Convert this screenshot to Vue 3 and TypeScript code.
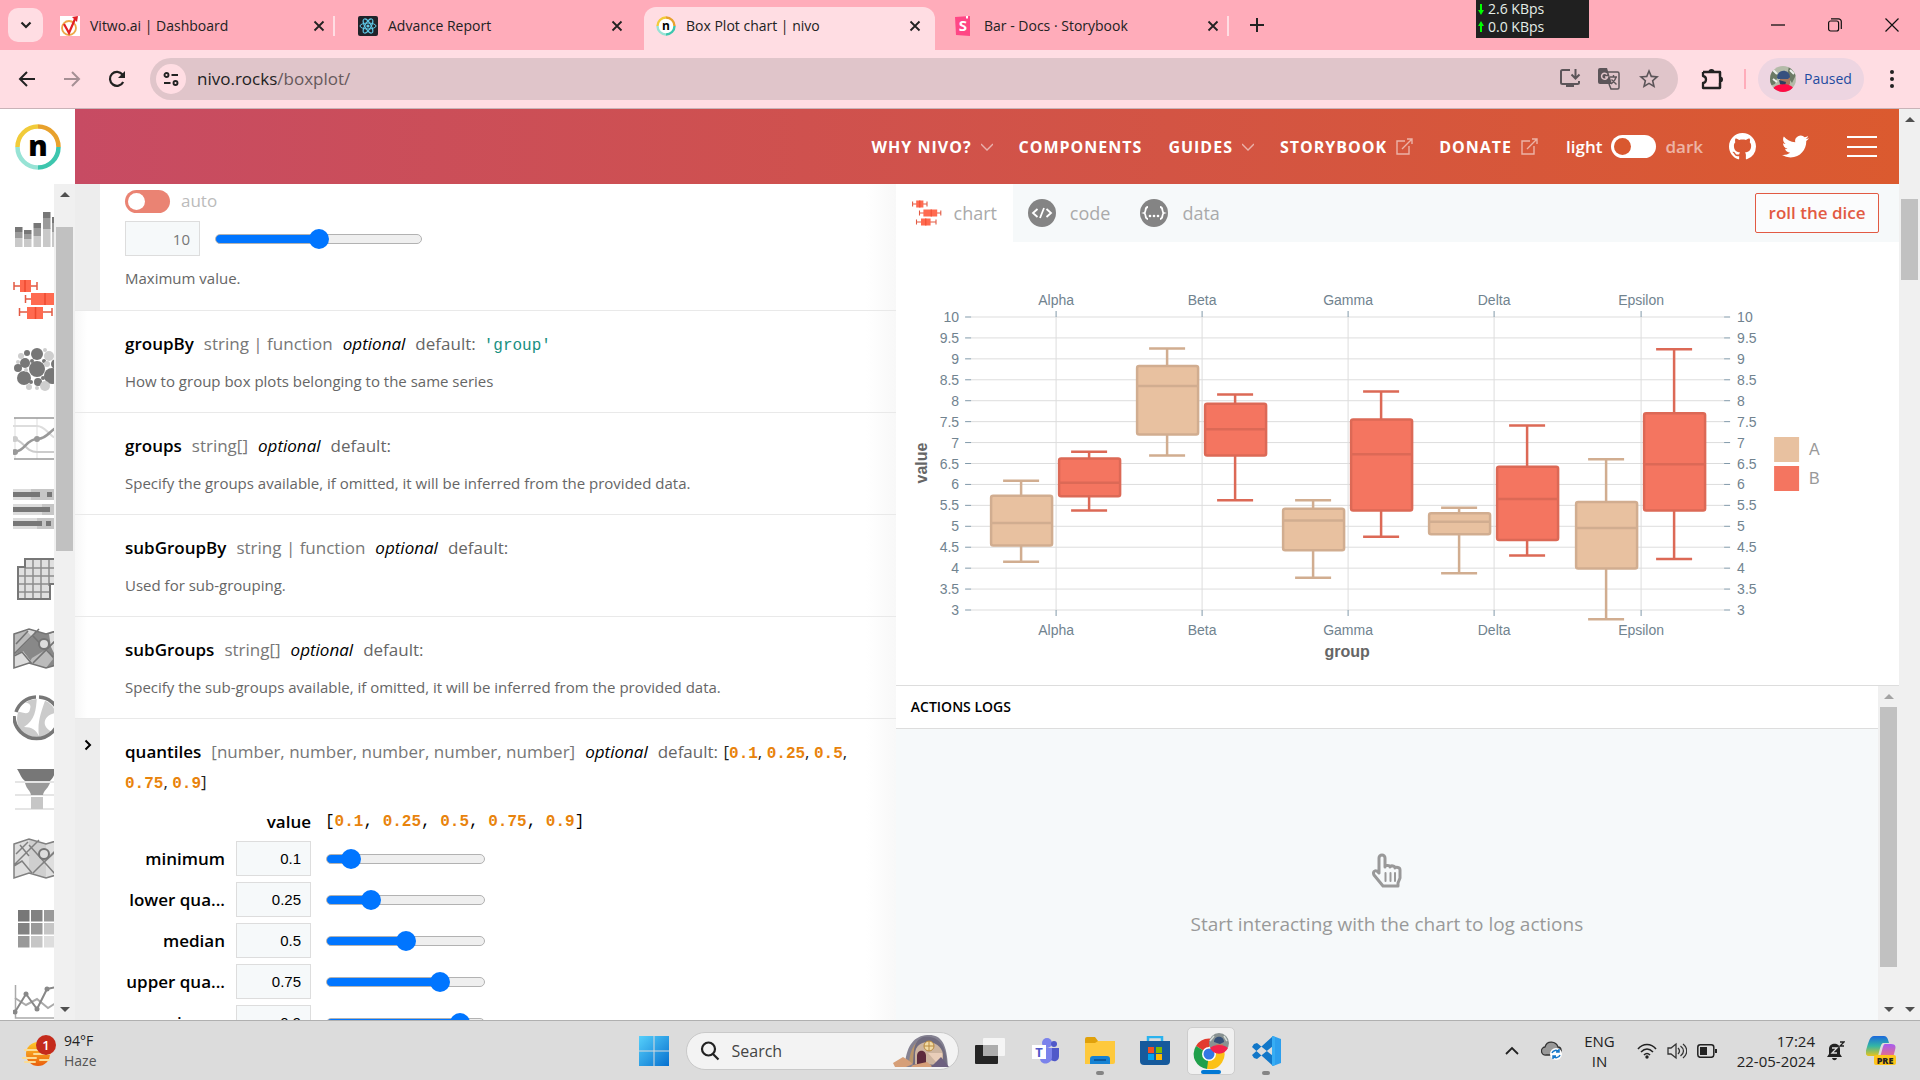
<script setup lang="ts">
import { computed, ref } from 'vue'

interface BrowserTab {
  id: string
  title: string
  active?: boolean
}

const browserTabs: BrowserTab[] = [
  { id: 'vitwo', title: 'Vitwo.ai | Dashboard' },
  { id: 'react', title: 'Advance Report' },
  { id: 'nivo', title: 'Box Plot chart | nivo', active: true },
  { id: 'storybook', title: 'Bar - Docs · Storybook' },
]

interface NavLink {
  label: string
  icon?: 'chevron' | 'external'
}

const navLinks: NavLink[] = [
  { label: 'WHY NIVO?', icon: 'chevron' },
  { label: 'COMPONENTS' },
  { label: 'GUIDES', icon: 'chevron' },
  { label: 'STORYBOOK', icon: 'external' },
  { label: 'DONATE', icon: 'external' },
]

interface Prop {
  name: string
  type: string
  value?: string
  help: string
}

const props: Prop[] = [
  { name: 'groupBy', type: 'string | function', value: "'group'", help: 'How to group box plots belonging to the same series' },
  { name: 'groups', type: 'string[]', help: 'Specify the groups available, if omitted, it will be inferred from the provided data.' },
  { name: 'subGroupBy', type: 'string | function', help: 'Used for sub-grouping.' },
  { name: 'subGroups', type: 'string[]', help: 'Specify the sub-groups available, if omitted, it will be inferred from the provided data.' },
]

const maxValue = ref(10)
const quantiles = ref([
  { label: 'minimum', value: 0.1 },
  { label: 'lower qua...', value: 0.25 },
  { label: 'median', value: 0.5 },
  { label: 'upper qua...', value: 0.75 },
  { label: 'maximum', value: 0.9 },
])

const groups = ['Alpha', 'Beta', 'Gamma', 'Delta', 'Epsilon']
const colors = {
  A: { fill: '#e8c1a0', stroke: '#d1ad90' },
  B: { fill: '#f47560', stroke: '#dc6956' },
}
type Series = keyof typeof colors

// maximum, upper quartile, median, lower quartile, minimum
const summaries: Record<Series, number[][]> = {
  A: [
    [6.09, 5.73, 5.08, 4.54, 4.15],
    [9.25, 8.83, 8.35, 7.19, 6.69],
    [5.62, 5.42, 5.14, 4.43, 3.77],
    [5.44, 5.31, 5.11, 4.81, 3.88],
    [6.6, 5.58, 4.96, 3.99, 2.78],
  ],
  B: [
    [6.78, 6.62, 6.04, 5.72, 5.38],
    [8.15, 7.93, 7.32, 6.69, 5.62],
    [8.22, 7.55, 6.72, 5.38, 4.75],
    [7.41, 6.42, 5.65, 4.67, 4.3],
    [9.23, 7.7, 6.48, 5.38, 4.22],
  ],
}

const plot = { left: 75, right: 828, top: 75, bottom: 368 }
const yScale = (v: number): number => plot.top + ((10 - v) / 7) * (plot.bottom - plot.top)
const xScale = (i: number): number => Math.floor(160 + i * 146.25)
const yTicks = Array.from({ length: 15 }, (_, i) => 10 - i / 2)

const boxes = computed(() =>
  (['A', 'B'] as Series[]).flatMap((series) =>
    summaries[series].map((values, i) => {
      const [high, q3, mid, q1, low] = values.map(yScale)
      return { key: series + i, x: xScale(i) + (series === 'A' ? -35 : 33), high, q3, mid, q1, low, ...colors[series] }
    }),
  ),
)

const heat = ['#777', '#828282', '#999', '#828282', '#999', '#c6c6c6', '#999', '#c6c6c6', '#ddd']
const bubbles: number[][] = [
  [24, 25, 8, 0], [24, 10, 6, 0], [12, 19, 5, 0], [11, 34, 7, 0], [39, 32, 8, 0], [5, 24, 4, 0],
  [25, 38, 4, 0], [43, 20, 5, 0], [14, 9, 3, 0], [31, 17, 2, 0], [36, 12, 5, 1], [8, 12, 3, 1],
  [5, 18, 2, 1], [32, 42, 5, 1], [16, 43, 3, 1], [24, 44, 2, 1], [32, 6, 2, 1], [34, 20, 3, 1],
  [18, 38, 2, 0], [13, 26, 2, 1], [19, 17, 2, 0], [30, 34, 2, 0],
]
</script>

<template>
  <div class="screen">
    <header class="tabstrip">
      <button class="tab-search" aria-label="Search tabs">
        <svg width="12" height="8" viewBox="0 0 12 8"><path d="M1.500 1.500 6 6l4.500-4.500" fill="none" stroke="#222" stroke-width="2.200" /></svg>
      </button>
      <div class="tabs">
        <div v-for="tab in browserTabs" :key="tab.id" class="tab" :class="{ active: tab.active }">
          <svg v-if="tab.id === 'vitwo'" class="fav" viewBox="0 0 20 20">
            <path d="M0 0h20v20H0z" fill="#fff" /><circle cx="9" cy="12" r="7" fill="none" stroke="#eda84a" stroke-width="1.800" />
            <path d="M4 8l5 9 6-14" fill="none" stroke="#e21f26" stroke-width="2.200" /><path d="M12 1l6-1-1 6z" fill="#e21f26" />
          </svg>
          <svg v-else-if="tab.id === 'react'" class="fav" viewBox="0 0 20 20">
            <rect width="20" height="20" rx="2" fill="#20232a" />
            <g fill="none" stroke="#5fc9e8"><ellipse cx="10" cy="10" rx="8" ry="3" /><ellipse cx="10" cy="10" rx="8" ry="3" transform="rotate(60 10 10)" /><ellipse cx="10" cy="10" rx="8" ry="3" transform="rotate(120 10 10)" /></g>
            <circle cx="10" cy="10" r="1.600" fill="#5fc9e8" />
          </svg>
          <svg v-else-if="tab.id === 'nivo'" class="fav" viewBox="0 0 20 20">
            <circle cx="10" cy="10" r="8" fill="#fff" />
            <g fill="none" stroke-width="2.400"><path d="M1.500 10A8.500 8.500 0 0 1 10 1.500" stroke="#f1cb3a" /><path d="M10 1.500a8.500 8.500 0 0 1 8.500 8.500" stroke="#e8a12c" /><path d="M18.500 10a8.500 8.500 0 0 1-8.500 8.500" stroke="#3dc6ae" /><path d="M10 18.500A8.500 8.500 0 0 1 1.500 10" stroke="#97e3d5" /></g>
            <text x="10" y="14" text-anchor="middle" class="fav-n">n</text>
          </svg>
          <svg v-else class="fav" viewBox="0 0 20 20">
            <path d="M1 1l15-1v20L2 19z" fill="#ff4785" /><text x="9" y="15" text-anchor="middle" class="fav-s">S</text><path d="M12 0h2v3l-1-1-1 1z" fill="#fff" />
          </svg>
          <span class="tab-title">{{ tab.title }}</span>
          <button class="tab-close" :aria-label="'Close ' + tab.title">
            <svg width="12" height="12" viewBox="0 0 12 12"><path d="M1.500 1.500l9 9M10.500 1.500l-9 9" stroke="#222" stroke-width="1.800" /></svg>
          </button>
        </div>
      </div>
      <button class="new-tab" aria-label="New tab">
        <svg width="14" height="14" viewBox="0 0 14 14"><path d="M7 0v14M0 7h14" stroke="#222" stroke-width="2" /></svg>
      </button>
      <div class="netspeed">
        <div><svg width="8" height="12" viewBox="0 0 8 12"><path d="M3 1h2v6h2l-3 5-3-5h2z" fill="#0f0" /></svg>2.6 KBps</div>
        <div><svg width="8" height="12" viewBox="0 0 8 12"><path d="M3 11h2V5h2L4 0 1 5h2z" fill="#0f0" /></svg>0.0 KBps</div>
      </div>
      <div class="window-buttons">
        <button aria-label="Minimise"><svg width="14" height="14" viewBox="0 0 14 14"><path d="M0 7h14" stroke="#111" stroke-width="1.300" /></svg></button>
        <button aria-label="Restore"><svg width="14" height="14" viewBox="0 0 14 14"><g fill="none" stroke="#111" stroke-width="1.200"><rect x=".6" y="3" width="10" height="10" rx="2" /><path d="M3 .8h7.500a2.800 2.800 0 0 1 2.800 2.800V11" /></g></svg></button>
        <button aria-label="Close"><svg width="14" height="14" viewBox="0 0 14 14"><path d="M.5.5l13 13M13.500.5l-13 13" stroke="#111" stroke-width="1.200" /></svg></button>
      </div>
    </header>

    <div class="toolbar">
      <div class="nav-buttons">
        <button aria-label="Back"><svg width="18" height="18" viewBox="0 0 18 18"><path d="M17 9H2.500M9 2L2 9l7 7" fill="none" stroke="#222" stroke-width="2" /></svg></button>
        <button aria-label="Forward"><svg width="18" height="18" viewBox="0 0 18 18"><path d="M1 9h14.500M9 2l7 7-7 7" fill="none" stroke="#a58f94" stroke-width="2" /></svg></button>
        <button aria-label="Reload"><svg width="18" height="18" viewBox="0 0 18 18"><path d="M15.200 12A7 7 0 1 1 14.500 4.500L16 6" fill="none" stroke="#222" stroke-width="2.200" /><path d="M17 1v7h-7z" fill="#222" /></svg></button>
      </div>
      <div class="omnibox">
        <button class="site-info" aria-label="Site information">
          <svg width="16" height="14" viewBox="0 0 16 14"><g fill="none" stroke="#222" stroke-width="1.900"><circle cx="3.500" cy="3" r="2" /><path d="M8.500 3H15M1 11h6.500" /><circle cx="12.500" cy="11" r="2" /></g></svg>
        </button>
        <div class="url">nivo.rocks<span>/boxplot/</span></div>
        <button aria-label="Install"><svg width="22" height="22" viewBox="0 0 22 22"><g fill="none" stroke="#5c5559" stroke-width="2"><path d="M11 2H3.500A1.500 1.500 0 0 0 2 3.500v11A1.500 1.500 0 0 0 3.500 16h15a1.500 1.500 0 0 0 1.500-1.500V13" /><path d="M16.500 1v9M12.500 6.500l4 4 4-4" /></g><path d="M7 16h8v3H7z" fill="#5c5559" /></svg></button>
        <button aria-label="Translate"><svg width="22" height="22" viewBox="0 0 22 22"><path d="M2 0h7l5 16H2a2 2 0 0 1-2-2V2a2 2 0 0 1 2-2z" fill="#5c5559" /><path d="M10 4h9.500A1.500 1.500 0 0 1 21 5.500v14a1.500 1.500 0 0 1-1.500 1.500H13l-2-5" fill="none" stroke="#5c5559" stroke-width="1.500" /><path d="M12 9h7M15.500 7v2M18 9c-.5 3-3 5.500-5 7M13.500 11.500l5 5" stroke="#5c5559" stroke-width="1.400" fill="none" /><path d="M9 6.500A3 3 0 1 0 9.500 9H7" fill="none" stroke="#e0c5ca" stroke-width="1.500" /></svg></button>
        <button aria-label="Bookmark"><svg width="24" height="24" viewBox="0 0 24 24"><path fill="#5c5559" d="M22 9.240l-7.190-.62L12 2 9.190 8.630 2 9.240l5.460 4.730L5.820 21 12 17.270 18.180 21l-1.630-7.030L22 9.240zM12 15.400l-3.760 2.270 1-4.280-3.320-2.880 4.380-.38L12 6.100l1.710 4.040 4.380.38-3.320 2.880 1 4.280L12 15.400z" /></svg></button>
      </div>
      <button class="extensions" aria-label="Extensions"><svg width="22" height="22" viewBox="0 0 22 22"><path d="M2 4h17v4.500M2 4v4c4 .5 4 6.500 0 7v5h17v-5" fill="none" stroke="#222" stroke-width="2.300" stroke-linejoin="round" /><path d="M19 4v16" stroke="#222" stroke-width="2.300" /><path d="M7.500 4a3 3 0 0 1 6 0zM19 8.500a3 3 0 0 1 0 6z" fill="#222" /></svg></button>
      <span class="divider"></span>
      <button class="profile">
        <svg width="26" height="26" viewBox="0 0 26 26"><defs><clipPath id="avatar-clip"><circle cx="13" cy="13" r="13" /></clipPath></defs><g clip-path="url(#avatar-clip)"><path d="M0 0h26v26H0z" fill="#b4bba9" /><path d="M0 2l8 7-3 9-5 2zM19 0l7 9-4 8-5-7z" fill="#6b7a65" /><path d="M2 3l5 5M20 4l4 4M3 13l4 3" stroke="#edf1ee" stroke-width="2" /><path d="M10 12h10v6l-4 3-6-2z" fill="#a4765e" /><path d="M7 12c0-9 12-10 13-1l-2 2H8z" fill="#36517f" /><path d="M9 14l7 2-1 4-5-2z" fill="#2d3d5f" /><path d="M2 26c0-10 21-10 22-2v2z" fill="#ff0b45" /></g></svg>
        Paused
      </button>
      <button class="kebab" aria-label="Menu"><svg width="4" height="20" viewBox="0 0 4 20"><g fill="#222"><circle cx="2" cy="3" r="2" /><circle cx="2" cy="10" r="2" /><circle cx="2" cy="17" r="2" /></g></svg></button>
    </div>

    <main class="page">
      <aside class="sidebar">
        <a href="#" class="logo" aria-label="nivo">
          <svg width="46" height="46" viewBox="0 0 46 46"><g fill="none" stroke-width="4.500"><path d="M2.500 23A20.500 20.500 0 0 1 23 2.500" stroke="#f1cb3a" /><path d="M23 2.500A20.500 20.500 0 0 1 43.500 23" stroke="#e8a12c" /><path d="M43.500 23A20.500 20.500 0 0 1 23 43.500" stroke="#3dc6ae" /><path d="M23 43.500A20.500 20.500 0 0 1 2.500 23" stroke="#97e3d5" /></g><text x="23" y="32" text-anchor="middle" class="logo-n">n</text></svg>
        </a>
        <div class="sidebar-body">
          <nav class="chart-list">
            <a href="#" aria-label="bar"><svg viewBox="0 0 50 50"><g fill="#c9c9c9"><path d="M2 34h7.500v9H2zM11 35h7.500v8H11zM20.500 32H28v11h-7.500zM30 24h7.500v19H30zM39 26h7.500v17H39z" /></g><g fill="#9b9b9b"><path d="M2 28h7.500v6H2zM11 30h7.500v5H11zM20.500 24H28v8h-7.500zM30 14h7.500v11H30zM39 18h7.500v10H39z" /></g><g fill="#777"><path d="M2 23h7.500v5H2zM11 26h7.500v4H11zM20.500 19H28v5h-7.500zM30 8h7.500v6H30zM39 13h7.500v6H39z" /></g></svg></a>
            <a href="#" aria-label="boxplot"><svg viewBox="0 0 50 50"><path d="M1 12h23M1 8v8M24 8v8M12 25h36M12.500 21v8M48 21v8M6 38h33M6.500 34v8M39 34v8" stroke="#e25a43" stroke-width="1.500" /><path d="M7 6h11v12H7zM18 19h27v12H18zM14 33h16v12H14z" fill="#ff6a50" /><path d="M12 6v12M32 19v12M22.500 33v12" stroke="#ee4a2f" stroke-width="1.500" /></svg></a>
            <a href="#" aria-label="circle packing"><svg viewBox="0 0 50 50"><circle v-for="(b, i) in bubbles" :key="i" :cx="b[0]" :cy="b[1]" :r="b[2]" :fill="b[3] ? '#cecece' : '#777'" /></svg></a>
            <a href="#" aria-label="bump"><svg viewBox="0 0 50 50"><path d="M2 4v41M24 4v41" stroke="#ddd" /><g fill="none"><path d="M0 12h24c10 0 12 13 24 13" stroke="#ddd" stroke-width="2" /><path d="M0 25c10 0 12 13 24 13h26" stroke="#ccc" stroke-width="2" /><path d="M0 38c12 0 13-13 24-13 12 0 14-13 26-13" stroke="#999" stroke-width="2.500" /><path d="M1 4h49M1 45h49" stroke="#999" stroke-width="1.500" /></g><g fill="#999"><circle cx="2" cy="38" r="3" /><circle cx="24" cy="25" r="3" /></g><circle cx="2" cy="25" r="3" fill="#ccc" /></svg></a>
            <a href="#" aria-label="bullet"><svg viewBox="0 0 50 50"><path d="M0 5h50v11H0zM0 20h50v11H0zM0 34h50v11H0z" fill="#dcdcdc" /><path d="M18 5h32v11H18zM29 20h21v11H29zM24 34h26v11H24z" fill="#c6c6c6" /><path d="M0 8h27v5H0zM34 8h5v5h-5zM0 23h37v5H0zM41 23h5v5h-5zM0 37h29v5H0zM33 37h5v5h-5z" fill="#777" /></svg></a>
            <a href="#" aria-label="calendar"><svg viewBox="0 0 50 50"><path d="M12 5h38v25H37v15H5V13h7z" fill="#e0e0e0" /><path d="M12 14v31M20 6v39M28 6v39M36 6v26M44 6v24M12 14h38M6 22h44M6 30h31M6 38h31" stroke="#8d8d8d" stroke-width="1.500" /><path d="M50 5H12v8H5v32h32V30h13" fill="none" stroke="#777" stroke-width="2" /></svg></a>
            <a href="#" aria-label="choropleth"><svg viewBox="0 0 50 50"><path d="M1 10l15-5 17 5 17-5v34l-17 5-17-5-15 5z" fill="#888" /><path d="M1 10l15-5 5 6L1 31z" fill="#bbb" /><path d="M1 31l9-4 10 13-4-1-15 5zM13 6h10l-4 7zM36 10l14-4v15l-8 10-4-8z" fill="#ddd" /><path d="M19 34l15-9 6 10-7 9-17-5z" fill="#bbb" /><path d="M1 10l15-5 17 5 17-5v34l-17 5-17-5-15 5zM1 30L26 5M3 20l12-13M1 32l8-4 10 12M20 39l29-29M20 12l20 21" fill="none" stroke="#747474" stroke-width="1.600" /><circle cx="31" cy="20" r="5" fill="#ddd" stroke="#747474" stroke-width="2" /></svg></a>
            <a href="#" aria-label="chord"><svg viewBox="0 0 50 50"><circle cx="24" cy="25" r="20" fill="#cbcbcb" /><path d="M0 17c8 0 16 6 17-2C19 9 14 9 10 8zM24 2l9 2c-5 14-9 25-7 38-3-6-7-9-15-9 11-7 12-16 13-31zM50 19c-12-2-20 5-18 12 1 3 4 6 9 7z" fill="#fff" /><path d="M23 3A22 22 0 0 0 3 18M1 22a22 22 0 1 0 45 0M26 3a22 22 0 0 1 20 16" fill="none" stroke="#777" stroke-width="3.500" /></svg></a>
            <a href="#" aria-label="funnel"><svg viewBox="0 0 50 50"><path d="M2 18h46M2 31h46M2 45h46" stroke="#ddd" stroke-width="1.500" /><path d="M4 5h40c-2 4-4 9-7 12H12C8 14 7 9 4 5z" fill="#777" /><path d="M12 19h25c-3 7-6 7-7 12H18c-1-5-4-5-6-12z" fill="#999" /><path d="M18 33h12v12H18z" fill="#c6c6c6" /></svg></a>
            <a href="#" aria-label="geomap"><svg viewBox="0 0 50 50"><path d="M1 10l15-5 17 5 17-5v34l-17 5-17-5-15 5z" fill="#dedede" /><path d="M16 5l17 5v34l-17-5z" fill="#cfcfcf" /><path d="M1 10l15-5 17 5 17-5v34l-17 5-17-5-15 5zM1 31L26 6M3 20L15 8M1 32l8-5 10 12M20 39l29-29M7 11l9 11M16 11l26 29M27 32l15-14" fill="none" stroke="#808080" stroke-width="1.500" /><circle cx="31" cy="20" r="5" fill="#ddd" stroke="#747474" stroke-width="2" /></svg></a>
            <a href="#" aria-label="heatmap"><svg viewBox="0 0 50 50"><rect v-for="(c, i) in heat" :key="i" :x="5 + (i % 3) * 13" :y="6 + Math.floor(i / 3) * 13" width="11.500" height="11.500" :fill="c" /></svg></a>
            <a href="#" aria-label="line"><svg viewBox="0 0 50 50"><path d="M2.500 11v33H50" fill="none" stroke="#aaa" stroke-width="1.500" /><path d="M2 24l11 7 11-6 11 9 11-7" fill="none" stroke="#aaa" stroke-width="2" /><path d="M2 38l11-18 11 15 10-20 14-3" fill="none" stroke="#888" stroke-width="2" /><g fill="#888"><circle cx="13" cy="20" r="2.500" /><circle cx="24" cy="35" r="2.500" /><circle cx="34" cy="15" r="2.500" /><circle cx="2" cy="38" r="2.500" /></g></svg></a>
          </nav>
          <div class="scrollbar"><i class="up"></i><span class="thumb side-thumb"></span><i class="down"></i></div>
        </div>
      </aside>

      <div class="content">
        <header class="site-header">
          <nav class="site-nav">
            <a v-for="link in navLinks" :key="link.label" href="#">
              {{ link.label }}
              <svg v-if="link.icon === 'chevron'" width="12" height="8" viewBox="0 0 12 8"><path d="M0 1l6 6 6-6" /></svg>
              <svg v-if="link.icon === 'external'" width="17" height="17" viewBox="0 0 17 17"><path d="M9 3H1v13h12V8M6 11L16 1M11 1h5v5" /></svg>
            </a>
          </nav>
          <label class="theme">light<input type="checkbox" role="switch" aria-label="Dark theme" class="switch white" /><span>dark</span></label>
          <a href="#" class="social" aria-label="GitHub"><svg width="27" height="27" viewBox="0 0 16 16"><path fill="#fff" d="M8 0C3.580 0 0 3.580 0 8c0 3.540 2.290 6.530 5.470 7.590.4.070.55-.17.55-.38 0-.19-.01-.82-.01-1.490-2.010.37-2.530-.49-2.690-.94-.09-.23-.48-.94-.82-1.130-.28-.15-.68-.52-.01-.53.63-.01 1.080.58 1.230.82.72 1.210 1.870.87 2.330.66.070-.52.28-.87.51-1.070-1.780-.2-3.640-.89-3.640-3.950 0-.87.31-1.590.82-2.150-.08-.2-.36-1.020.08-2.120 0 0 .67-.21 2.200.82.64-.18 1.320-.27 2-.27s1.360.09 2 .27c1.530-1.040 2.200-.82 2.200-.82.44 1.100.16 1.920.08 2.120.51.56.82 1.270.82 2.150 0 3.070-1.870 3.750-3.650 3.950.29.25.54.73.54 1.480 0 1.070-.01 1.930-.01 2.200 0 .21.15.46.55.38A8.010 8.010 0 0 0 16 8c0-4.420-3.580-8-8-8z" /></svg></a>
          <a href="#" class="social" aria-label="Twitter"><svg width="27" height="27" viewBox="0 0 24 24"><path fill="#fff" d="M23.953 4.570a10 10 0 01-2.825.775 4.958 4.958 0 002.163-2.723c-.951.555-2.005.959-3.127 1.184a4.920 4.920 0 00-8.384 4.482C7.690 8.095 4.067 6.130 1.640 3.162a4.822 4.822 0 00-.666 2.475c0 1.710.87 3.213 2.188 4.096a4.904 4.904 0 01-2.228-.616v.060a4.923 4.923 0 003.946 4.827 4.996 4.996 0 01-2.212.085 4.936 4.936 0 004.604 3.417 9.867 9.867 0 01-6.102 2.105c-.39 0-.779-.023-1.170-.067a13.995 13.995 0 007.557 2.209c9.053 0 13.998-7.496 13.998-13.985 0-.21 0-.42-.015-.63A9.935 9.935 0 0024 4.590z" /></svg></a>
          <button class="burger" aria-label="Open menu"><i></i><i></i><i></i></button>
        </header>

        <div class="columns">
          <section class="settings">
            <div class="setting grouped">
              <div class="gutter"></div>
              <div class="setting-body max-value">
                <label class="auto"><input type="checkbox" role="switch" class="switch coral" />auto</label>
                <div class="control">
                  <input type="text" class="number muted" aria-label="Maximum value" :value="maxValue" />
                  <input type="range" class="slider wide" min="0" max="20" v-model.number="maxValue" aria-label="Maximum value slider" :style="{ '--ratio': maxValue / 20 }" />
                </div>
                <p class="help">Maximum value.</p>
              </div>
            </div>

            <div v-for="p in props" :key="p.name" class="setting">
              <div class="gutter blank"></div>
              <div class="setting-body">
                <div class="prop-line">
                  <b>{{ p.name }}</b><span class="type">{{ p.type }}</span><em>optional</em><span>default:</span><code v-if="p.value">{{ p.value }}</code>
                </div>
                <p class="help">{{ p.help }}</p>
              </div>
            </div>

            <div class="setting grouped last">
              <button class="gutter" aria-label="Expand quantiles">
                <svg width="8" height="12" viewBox="0 0 8 12"><path d="M1.500 1.500L6 6l-4.500 4.500" fill="none" stroke="#000" stroke-width="2" /></svg>
              </button>
              <div class="setting-body">
                <div class="prop-line">
                  <b>quantiles</b><span class="type">[number, number, number, number, number]</span><em>optional</em><span>default: </span><span class="array">[<b>0.1</b>, <b>0.25</b>, <b>0.5</b>, <b>0.75</b>, <b>0.9</b>]</span>
                </div>
                <div class="current">
                  <span>value</span><code>[<template v-for="(q, i) in quantiles" :key="q.label"><b>{{ q.value }}</b>{{ i < 4 ? ', ' : '' }}</template>]</code>
                </div>
                <div class="quantile-list">
                  <div v-for="(q, i) in quantiles" :key="q.label" class="quantile">
                    <label :for="'q' + i">{{ q.label }}</label>
                    <input :id="'q' + i" type="text" class="number" :value="q.value" />
                    <input type="range" class="slider" min="0" max="1" step="0.05" v-model.number="q.value" :aria-label="q.label" :style="{ '--ratio': q.value }" />
                  </div>
                </div>
              </div>
            </div>
          </section>

          <section class="preview">
            <div class="chart-tabs">
              <button class="chart-tab selected">
                <svg width="30" height="28" viewBox="0 0 50 46"><path d="M1 8h24M1 4v8M25 4v8M12 23h36M12.500 19v8M48 19v8M7 38h33M7.500 34v8M40 34v8" stroke="#e25a43" stroke-width="1.800" /><path d="M7 2h12v12H7zM19 17h23v12H19zM15 32h16v12H15z" fill="#ff6a50" /><path d="M13 2v12M32 17v12M23 32v12" stroke="#ee4a2f" stroke-width="1.600" /></svg>
                chart
              </button>
              <button class="chart-tab">
                <svg width="28" height="28" viewBox="0 0 28 28"><circle cx="14" cy="14" r="14" fill="#848484" /><path d="M9.500 10L5 14l4.500 4M18.500 10l4.500 4-4.500 4M16 9l-4 10" fill="none" stroke="#fff" stroke-width="1.800" /></svg>
                code
              </button>
              <button class="chart-tab">
                <svg width="28" height="28" viewBox="0 0 28 28"><circle cx="14" cy="14" r="14" fill="#848484" /><path d="M8 8C4 8 7 13 4 14c3 1 0 6 4 6M20 8c4 0 1 5 4 6-3 1 0 6-4 6" fill="none" stroke="#fff" stroke-width="1.800" /><g fill="#fff"><circle cx="10" cy="17" r="1.300" /><circle cx="14" cy="17" r="1.300" /><circle cx="18" cy="17" r="1.300" /></g></svg>
                data
              </button>
              <button class="dice">roll the dice</button>
            </div>

            <svg class="chart" viewBox="0 0 1003 443" role="img" aria-label="Box plot of value by group">
              <g stroke="#ddd">
                <line v-for="t in yTicks" :key="t" :x1="plot.left" :x2="plot.right" :y1="yScale(t)" :y2="yScale(t)" />
                <line v-for="(g, i) in groups" :key="g" :x1="xScale(i)" :x2="xScale(i)" :y1="plot.top" :y2="plot.bottom" />
              </g>
              <g stroke="#8199a9">
                <template v-for="t in yTicks" :key="t">
                  <line :x1="plot.left - 6" :x2="plot.left" :y1="yScale(t)" :y2="yScale(t)" />
                  <line :x1="plot.right" :x2="plot.right + 6" :y1="yScale(t)" :y2="yScale(t)" />
                </template>
                <template v-for="(g, i) in groups" :key="g">
                  <line :x1="xScale(i)" :x2="xScale(i)" :y1="plot.top - 6" :y2="plot.top" />
                  <line :x1="xScale(i)" :x2="xScale(i)" :y1="plot.bottom" :y2="plot.bottom + 6" />
                </template>
              </g>
              <g class="tick">
                <template v-for="t in yTicks" :key="t">
                  <text :x="plot.left - 12" :y="yScale(t) + 5" text-anchor="end">{{ t }}</text>
                  <text :x="plot.right + 13" :y="yScale(t) + 5">{{ t }}</text>
                </template>
                <template v-for="(g, i) in groups" :key="g">
                  <text :x="xScale(i)" :y="plot.top - 12" text-anchor="middle">{{ g }}</text>
                  <text :x="xScale(i)" :y="plot.bottom + 25" text-anchor="middle">{{ g }}</text>
                </template>
              </g>
              <text x="451" y="415" text-anchor="middle" class="axis-title">group</text>
              <text x="0" y="0" text-anchor="middle" class="axis-title" transform="translate(31 221) rotate(-90)">value</text>
              <g v-for="b in boxes" :key="b.key" :stroke="b.stroke" stroke-width="2.500">
                <path :d="`M${b.x} ${b.high}V${b.low}M${b.x - 18} ${b.high}h36M${b.x - 18} ${b.low}h36`" fill="none" />
                <rect :x="b.x - 30" :y="b.q3" width="61" :height="b.q1 - b.q3" rx="2" :fill="b.fill" />
                <line :x1="b.x - 30" :x2="b.x + 31" :y1="b.mid" :y2="b.mid" />
              </g>
              <rect x="878" y="195" width="25" height="25" :fill="colors.A.fill" /><rect x="878" y="224" width="25" height="25" :fill="colors.B.fill" />
              <g class="legend"><text x="913" y="213">A</text><text x="913" y="242">B</text></g>
            </svg>

            <div class="logs">
              <div class="logs-main">
                <h2>ACTIONS LOGS</h2>
                <div class="logs-empty">
                  <svg width="32" height="36" viewBox="0 0 32 36"><path d="M8 20V5a3 3 0 0 1 6 0v9c0-2 5-2 5 0 1-2 5-1 5 1 1-1 5-1 5 2v8l-2 5v3H12L3 22c-2-4 2-6 5-2z" fill="none" stroke="#999" stroke-width="3" stroke-linejoin="round" /><path d="M14.500 20v8M19.500 20v8M24 20v8" stroke="#999" stroke-width="2" stroke-linecap="round" /></svg>
                  <p>Start interacting with the chart to log actions</p>
                </div>
              </div>
              <div class="scrollbar"><i class="up pale"></i><span class="thumb logs-thumb"></span><i class="down"></i></div>
            </div>
          </section>
        </div>
      </div>
      <div class="scrollbar page-bar"><i class="up"></i><span class="thumb page-thumb"></span><i class="down"></i></div>
    </main>

    <footer class="taskbar">
      <button class="weather">
        <svg width="34" height="32" viewBox="0 0 34 32"><defs><linearGradient id="sun" x2="0" y2="1"><stop stop-color="#ffc928" /><stop offset="1" stop-color="#ea5d0c" /></linearGradient></defs><circle cx="16" cy="19" r="12" fill="url(#sun)" /><path d="M3 15h14M12 19h16M1 23h13M18 25h9M3 27h10" stroke="#fbdc95" stroke-width="2" stroke-linecap="round" /><circle cx="24" cy="10" r="10" fill="#c42b1c" /><text x="24" y="15" text-anchor="middle" class="badge">1</text></svg>
        <span><strong>94°F</strong><br />Haze</span>
      </button>
      <div class="apps">
        <button aria-label="Start"><svg width="30" height="30" viewBox="0 0 30 30"><defs><linearGradient id="win" x2="1" y2="1"><stop stop-color="#56d0fb" /><stop offset="1" stop-color="#0670cf" /></linearGradient></defs><path d="M0 0h14.500v14.500H0zM15.500 0H30v14.500H15.500zM0 15.500h14.500V30H0zM15.500 15.500H30V30H15.500z" fill="url(#win)" /></svg></button>
        <label class="search">
          <svg width="20" height="20" viewBox="0 0 20 20"><circle cx="8.500" cy="8" r="6.500" fill="none" stroke="#222" stroke-width="2.200" /><path d="M13 13l5.500 5.500" stroke="#222" stroke-width="2.200" /></svg>
          <input type="text" placeholder="Search" aria-label="Search" />
          <svg width="58" height="34" viewBox="0 0 58 34"><path d="M12 30C14 10 22 2 34 1c14-1 20 8 21 32H10z" fill="#858292" /><path d="M16 29c1-15 7-24 18-26l5 2-3 8-14 16z" fill="#b8956a" /><path d="M30 3c15-2 24 8 24 29H20c1-17 0-24 10-29z" fill="#716c7f" /><path d="M22 30V20c0-16 25-16 28 0v11z" fill="#cdb5a0" /><circle cx="36" cy="12" r="5" fill="#f2dba5" stroke="#b88a40" /><path d="M36 7v10M31 12h10" stroke="#b88a40" /><path d="M24 31V22c0-7 9-7 9 0v9z" fill="#5d2b3d" /><path d="M35 19l8 9h6v-9z" fill="#e9ceb9" /><path d="M0 29l10-6 5 3 5 4-7 3H2zM20 31l14-3 6 5H18z" fill="#d69f78" /><path d="M40 31l8-8 8 10H38z" fill="#6d607f" /></svg>
        </label>
        <button aria-label="Task view"><svg width="30" height="30" viewBox="0 0 30 30"><rect y="9" width="23" height="19" rx="1" fill="#252525" /><rect x="8" y="2" width="22" height="18" rx="1" fill="#f5f5f5" /><path d="M8 9h15v11H8z" fill="#adadad" /></svg></button>
        <button aria-label="Teams"><svg width="28" height="26" viewBox="0 0 28 26"><circle cx="16" cy="5" r="5" fill="#7b83eb" /><circle cx="23" cy="6" r="3" fill="#5059c9" /><path d="M17 10h11v8c0 6-6 6-8 4z" fill="#5059c9" /><path d="M9 10h12v9c0 8-12 9-12 1z" fill="#7b83eb" /><path d="M1 7h14v14H1z" fill="#fff" /><text x="8" y="19" text-anchor="middle" class="teams-t">T</text></svg></button>
        <button class="running" aria-label="File Explorer"><svg width="30" height="28" viewBox="0 0 30 28"><path d="M0 2a2 2 0 0 1 2-2h8l3 4h15a2 2 0 0 1 2 2v8H0z" fill="#e0a10b" /><path d="M0 6h10l3-2h17v21a2 2 0 0 1-2 2H0z" fill="#fec93d" /><path d="M5 27v-5a3 3 0 0 1 3-3h14a3 3 0 0 1 3 3v5z" fill="#1682d3" /><path d="M9 23h12" stroke="#0a4d8c" stroke-width="1.500" /></svg></button>
        <button aria-label="Store"><svg width="30" height="30" viewBox="0 0 30 30"><path d="M8 6V1h14v5" fill="none" stroke="#2bb3ee" stroke-width="2.500" /><path d="M0 5h30v20a4 4 0 0 1-4 4H4a4 4 0 0 1-4-4z" fill="#165a9c" /><path d="M8 11h6v6H8z" fill="#f25022" /><path d="M16 11h6v6h-6z" fill="#7fba00" /><path d="M8 18h6v6H8z" fill="#00a4ef" /><path d="M16 18h6v6h-6z" fill="#ffb900" /></svg></button>
        <button class="running current-app" aria-label="Chrome"><svg width="36" height="36" viewBox="0 0 36 36"><path d="M16 21L3 13A15 15 0 0 1 29 13z" fill="#e33b2e" /><path d="M16 21L3 13A15 15 0 0 0 14 36l8-12z" fill="#20a04b" /><path d="M16 21l-2 15A15 15 0 0 0 29 13H16z" fill="#fbc116" /><circle cx="16" cy="21" r="7" fill="#fff" /><circle cx="16" cy="21" r="5.500" fill="#3478e5" /><circle cx="26" cy="10" r="10" fill="#899292" /><path d="M17 8l4-5M31 3l3 5" stroke="#d5dcd6" stroke-width="1.500" /><path d="M21 9c0-7 10-7 10 0l-4 2z" fill="#365178" /><path d="M23 11h7v4h-6z" fill="#b88264" /><path d="M17 15c4-4 14-4 18 0a10 10 0 0 1-18 0z" fill="#f2244c" /></svg></button>
        <button class="running" aria-label="Visual Studio Code"><svg width="30" height="30" viewBox="0 0 30 30"><path d="M22 0l8 3v24l-8 3z" fill="#2d9fee" /><path d="M22 0L1 19l2 3 3 1L22 10zM22 30L1 11l2-3 3-1 16 13z" fill="#1277c8" /><path d="M21 0l3 1v28l-3 1z" fill="#37adf4" /></svg></button>
      </div>
      <div class="tray">
        <button aria-label="Hidden icons"><svg width="14" height="9" viewBox="0 0 14 9"><path d="M1 8l6-6 6 6" fill="none" stroke="#222" stroke-width="1.800" /></svg></button>
        <button class="cloud" aria-label="OneDrive"><svg width="22" height="20" viewBox="0 0 22 20"><path d="M5 14a4 4 0 0 1-1-8c2-7 11-6 13 0 4 0 4 6 1 8z" fill="#999" stroke="#333" stroke-width="1.300" /><circle cx="15" cy="13" r="6" fill="#fff" /><path d="M11 12a4 4 0 0 1 7-1M19 14a4 4 0 0 1-7 1M18 8v3h-3M12 18v-3h3" fill="none" stroke="#1678c9" stroke-width="1.500" /></svg></button>
        <button class="lang">ENG<br />IN</button>
        <button class="status" aria-label="Network, sound, battery">
          <svg width="20" height="16" viewBox="0 0 20 16"><g fill="none" stroke="#222" stroke-width="1.600"><path d="M1 6c5-6 13-6 18 0M4 9c4-4 8-4 12 0M7 12c2-2 4-2 6 0" /></g><circle cx="10" cy="14" r="1.700" fill="#222" /></svg>
          <svg width="20" height="18" viewBox="0 0 20 18"><path d="M1 6h3l5-4v14l-5-4H1z" fill="none" stroke="#333" stroke-width="1.300" /><path d="M11 6c2 2 2 4 0 6M13.500 4c4 3 4 7 0 10M16 2c5 4 5 10 0 14" fill="none" stroke="#333" stroke-width="1.300" /></svg>
          <svg width="20" height="14" viewBox="0 0 20 14"><rect x=".8" y=".8" width="16" height="12.500" rx="2.500" fill="none" stroke="#222" stroke-width="1.500" /><path d="M3 3h7v8H3zM18 5h2v4h-2z" fill="#222" /></svg>
        </button>
        <button class="clock">17:24<br />22-05-2024</button>
        <button aria-label="Notifications"><svg width="18" height="20" viewBox="0 0 18 20"><path d="M0 16l2-3V8c0-7 11-7 11 0v5l2 3z" fill="#222" /><path d="M5 17h5c-1 3-4 3-5 0z" fill="#222" /><path d="M5 7h5l-5 5h5M13 1h4l-4 4h4" fill="none" stroke="#ddd" stroke-width="1.300" /><path d="M13 1h4l-4 4h4" fill="none" stroke="#222" stroke-width="1.300" /></svg></button>
        <button class="copilot" aria-label="Copilot"><svg width="30" height="30" viewBox="0 0 30 30"><defs><linearGradient id="cp1" x2="0" y2="1"><stop stop-color="#1b68dc" /><stop offset=".5" stop-color="#33b6a5" /><stop offset="1" stop-color="#e8c41c" /></linearGradient><linearGradient id="cp2" x2="0" y2="1"><stop stop-color="#a65bf0" /><stop offset="1" stop-color="#f0727b" /></linearGradient></defs><path d="M8 0h10c3 0 4 3 5 7h-5c-3 0-3 2-6 13H4c-5 0-5-3-3-9S4 0 8 0z" fill="url(#cp1)" /><path d="M19 8h6c5 0 5 3 4 6l-2 8H12c4 0 4-14 7-14z" fill="url(#cp2)" /><rect x="8" y="19" width="22" height="10" rx="2" fill="#fdc51a" /><text x="19" y="28" text-anchor="middle" class="pre">PRE</text></svg></button>
      </div>
    </footer>
  </div>
</template>

<style>
html, body { margin: 0; overflow: hidden; }
</style>

<style scoped>
* { box-sizing: border-box; }
.screen { height: 100vh; display: flex; flex-direction: column; overflow: hidden; font: 15px/20px "Open Sans", "Noto Sans", sans-serif; color: #222; background: #fff; }
button { border: 0; padding: 0; margin: 0; background: none; font: inherit; color: inherit; display: flex; align-items: center; justify-content: center; }
a { color: inherit; text-decoration: none; }
svg { display: block; flex: none; }
p, h2 { margin: 0; }

.tabstrip { height: 50px; flex: none; display: flex; align-items: flex-start; background: #ffacba; }
.tab-search { width: 35px; height: 34px; margin: 8px 5px 0 8px; border-radius: 10px; background: #ffdde3; }
.tabs { display: flex; padding-top: 7px; }
.tab { position: relative; width: 298px; height: 43px; padding: 0 16px 5px 12px; display: flex; align-items: center; gap: 10px; font-size: 14px; }
.tab:first-child::after, .tab:last-child::after { content: ""; position: absolute; right: 11px; top: 9px; width: 2px; height: 20px; background: #ffdde3; }
.tab.active::before { content: ""; position: absolute; inset: 0 7px 0 0; border-radius: 12px 12px 0 0; background: #ffdde3; }
.tab > * { position: relative; }
.fav { width: 20px; height: 20px; }
.tab-title { flex: 1; white-space: nowrap; }
.tab-close { width: 22px; height: 22px; }
.fav-n { font: 700 12px "Open Sans", sans-serif; }
.fav-s { font: 700 15px "Open Sans", sans-serif; fill: #fff; }
.new-tab { width: 34px; height: 34px; margin-top: 8px; }
.netspeed { width: 113px; height: 38px; margin-left: auto; background: #202020; color: #e4eee8; font-size: 14px; line-height: 18px; }
.netspeed div { display: flex; align-items: center; gap: 3px; padding-left: 1px; }
.window-buttons { display: flex; height: 50px; margin-left: 160px; }
.window-buttons button { width: 57px; }

.toolbar { height: 59px; flex: none; display: flex; align-items: center; padding: 0 26px 0 6px; background: #ffdde3; border-bottom: 1px solid #c9b3b8; }
.nav-buttons { display: flex; gap: 3px; width: 144px; }
.nav-buttons button { width: 42px; height: 40px; }
.omnibox { flex: 1; height: 42px; border-radius: 21px; background: #e0c5ca; display: flex; align-items: center; gap: 17px; padding: 0 17px 0 6px; }
.site-info { width: 30px; height: 30px; border-radius: 15px; background: #ffdde3; margin-right: -6px; }
.url { flex: 1; font-size: 17px; color: #222; }
.url span { color: #66595c; }
.extensions { margin-left: 23px; }
.divider { width: 2px; height: 20px; margin: 0 12px 0 21px; background: #ffacba; }
.profile { height: 42px; width: 106px; border-radius: 21px; background: #edd5e1; color: #1d4ba0; gap: 8px; font-size: 14px; }
.kebab { margin-left: 26px; width: 4px; }

.page { flex: 1; min-height: 0; display: flex; }
.sidebar { width: 75px; flex: none; display: flex; flex-direction: column; }
.logo { height: 75px; flex: none; display: flex; align-items: center; justify-content: center; }
.logo-n { font: 800 29px "Open Sans", sans-serif; fill: #000; }
.sidebar-body { flex: 1; min-height: 0; display: flex; justify-content: flex-end; }
.chart-list { width: 41px; overflow: hidden; padding-top: 20px; display: flex; flex-direction: column; gap: 20px; }
.chart-list a, .chart-list svg { display: block; flex: none; width: 50px; height: 50px; }

.scrollbar { width: 21px; flex: none; background: #f0f0f0; display: flex; flex-direction: column; align-items: center; padding: 8px 0; }
.scrollbar i { border: 5px solid transparent; width: 0; height: 0; flex: none; }
.up { border-bottom-color: #505050 !important; border-top-width: 0 !important; }
.up.pale { border-bottom-color: #a3a3a3 !important; }
.down { border-top-color: #505050 !important; border-bottom-width: 0 !important; margin-top: auto; }
.thumb { width: 17px; background: #c1c1c1; flex: none; }
.side-thumb { height: 324px; margin-top: 30px; }
.page-thumb { height: 81px; margin-top: 77px; }
.logs-thumb { height: 260px; margin-top: 8px; }

.content { flex: 1; min-width: 0; display: flex; flex-direction: column; }
.site-header { height: 75px; flex: none; display: flex; align-items: center; justify-content: flex-end; padding-right: 22px; background: linear-gradient(90deg, #c74b63, #db5a2f); color: #fff; }
.site-nav { display: flex; gap: 26px; font-size: 16px; font-weight: 700; letter-spacing: 1px; margin-right: 28px; }
.site-nav a { display: flex; align-items: center; gap: 9px; white-space: nowrap; }
.site-nav svg { fill: none; stroke: #fff; stroke-width: 1.4; opacity: .55; }
.theme { display: flex; align-items: center; gap: 9px; font-size: 17px; font-weight: 600; }
.theme span { opacity: .55; }
.switch { appearance: none; margin: 0; width: 45px; height: 23px; border-radius: 12px; display: flex; align-items: center; padding: 0 3px; flex: none; }
.switch::before { content: ""; width: 17px; height: 17px; border-radius: 9px; }
.white { background: #fff; }
.white::before { background: #d9582f; }
.coral { background: #ea8373; }
.coral::before { background: #fff; }
.social { margin-left: 26px; }
.burger { margin-left: 38px; width: 30px; height: 21px; flex-direction: column; justify-content: space-between; }
.burger i { width: 30px; height: 2px; background: #fff; }

.columns { flex: 1; min-height: 0; display: grid; grid-template-columns: 45fr 55fr; }
.settings { overflow: hidden; background: linear-gradient(90deg, #f7f7f7, #fff 12px, #fff calc(100% - 30px), #f8f8f8); }
.setting { display: flex; border-bottom: 1px solid #e9e9e9; }
.gutter { width: 25px; flex: none; background: #ededed; align-items: flex-start; padding-top: 20px; }
.gutter.blank { background: none; }
.setting-body { flex: 1; min-width: 0; padding: 18px 20px 19px 25px; }
.max-value { padding-top: 6px; padding-bottom: 20px; }
.auto { display: flex; align-items: center; height: 22px; gap: 11px; font-size: 17px; color: #bbb; }
.control { display: flex; align-items: center; margin: 9px 0 10px; }
.number { width: 75px; height: 35px; border: 1px solid #ddd; border-radius: 0; background: #f6f9fa; padding: 0 9px; text-align: right; font: 15px "Liberation Sans", Arial, sans-serif; color: #000; outline: 0; }
.number.muted { color: #777; font-family: "Open Sans", sans-serif; }
.slider { appearance: none; margin: 0 0 0 15px; width: 159px; height: 20px; background: none; }
.slider.wide { width: 207px; }
.slider::-webkit-slider-runnable-track { height: 10px; border: 1px solid #b2b2b2; border-radius: 5px; background: linear-gradient(#0075ff, #0075ff) 0 0 / calc(10px + (100% - 20px) * var(--ratio)) 100% no-repeat border-box, #efefef; }
.slider::-webkit-slider-thumb { appearance: none; width: 20px; height: 20px; margin-top: -6px; border-radius: 10px; background: #0075ff; }
.help { font-size: 15px; line-height: 24px; color: #666; white-space: nowrap; }
.prop-line { font-size: 17px; line-height: 30px; color: #666; margin-bottom: 10px; }
.prop-line > b { font-weight: 600; color: #000; margin-right: 10px; }
.prop-line > .type { margin-right: 10px; color: #777; }
.prop-line > em { color: #000; margin-right: 10px; }
.prop-line code { font: 16px "Liberation Mono", monospace; color: #18907f; margin-left: 8px; }
.array { color: #222; margin-left: 1px; }
.array b, .current b { font: 700 16px "Liberation Mono", monospace; color: #e8830c; }
.current { display: flex; gap: 14px; line-height: 30px; font-size: 17px; font-weight: 600; color: #000; }
.current span { width: 186px; text-align: right; }
.current code { font: 400 16px/30px "Liberation Mono", monospace; }
.quantile-list { display: flex; flex-direction: column; gap: 6px; margin-top: 4px; }
.quantile { display: flex; align-items: center; }
.quantile label { width: 100px; margin-right: 11px; text-align: right; font-size: 17px; font-weight: 600; color: #000; white-space: nowrap; }

.preview { min-width: 0; display: flex; flex-direction: column; background: #fff; }
.chart-tabs { height: 58px; flex: none; display: flex; background: #f6f9fa; padding-right: 20px; align-items: center; font-size: 18px; color: #aaa; }
.chart-tab { height: 58px; padding: 0 15px; gap: 14px; }
.chart-tab.selected { background: #fff; width: 117px; padding: 0 13px; gap: 12px; }
.dice { margin-left: auto; height: 40px; width: 124px; border: 1px solid #e25a43; border-radius: 2px; color: #e25a43; font-size: 17px; font-weight: 600; background: #fff8; white-space: nowrap; }
.chart { width: 100%; height: 443px; font-family: "Liberation Sans", Arial, sans-serif; }
.tick { font-size: 14px; fill: #71838f; }
.axis-title { font-size: 16px; font-weight: 700; fill: #666; }
.legend { font-size: 16px; fill: #999; }
.logs { flex: 1; min-height: 0; display: flex; border-top: 1px solid #ddd; }
.logs-main { flex: 1; display: flex; flex-direction: column; background: #f6f9fa; }
.logs h2 { height: 43px; padding-left: 15px; font-size: 14px; line-height: 42px; font-weight: 600; color: #000; background: #fff; border-bottom: 1px solid #ddd; }
.logs-empty { flex: 1; display: flex; flex-direction: column; align-items: center; padding-top: 124px; gap: 20px; font-size: 19px; line-height: 30px; color: #999; }

.taskbar { height: 60px; flex: none; border-top: 1px solid #b0b0b0; background: #dcdcdc; display: grid; grid-template-columns: 1fr auto 1fr; align-items: center; }
.weather { justify-self: start; margin-left: 22px; gap: 8px; text-align: left; font-size: 14px; color: #555; }
.weather strong { font-weight: 400; color: #222; }
.badge { font: 600 13px "Open Sans", sans-serif; fill: #fff; }
.apps { display: flex; align-items: center; margin-left: 12px; }
.apps > button { position: relative; width: 55px; height: 48px; border-radius: 5px; }
.apps > button:first-child { width: 30px; margin-right: 17px; }
.search { width: 273px; height: 38px; margin-right: 4px; border: 1px solid #c9c9c9; border-radius: 19px; background: #f3f3f3; display: flex; align-items: center; padding: 0 7px 0 13px; gap: 12px; }
.search input { flex: 1; min-width: 0; border: 0; outline: 0; padding: 0; background: none; font: 16px "Open Sans", sans-serif; color: #444; }
.search input::placeholder { color: #444; opacity: 1; }
.running::after { content: ""; position: absolute; bottom: 0; left: 50%; width: 8px; height: 4px; margin-left: -4px; border-radius: 2px; background: #858585; }
.apps > .current-app { width: 48px; margin: 0 4px; background: #f0f0f0; border: 1px solid #cdcdcd; }
.current-app::after { width: 20px; margin-left: -10px; background: #0078d4; }
.teams-t { font: 700 13px "Open Sans", sans-serif; fill: #5059c9; }
.tray { justify-self: end; display: flex; align-items: center; padding-right: 24px; font-size: 15px; }
.cloud { margin-left: 22px; }
.lang { margin-left: 21px; }
.status { margin-left: 22px; gap: 10px; }
.clock { margin: 0 12px 0 20px; text-align: right; }
.copilot { margin-left: 21px; }
.pre { font: 800 9px "Open Sans", sans-serif; fill: #222; }
</style>
